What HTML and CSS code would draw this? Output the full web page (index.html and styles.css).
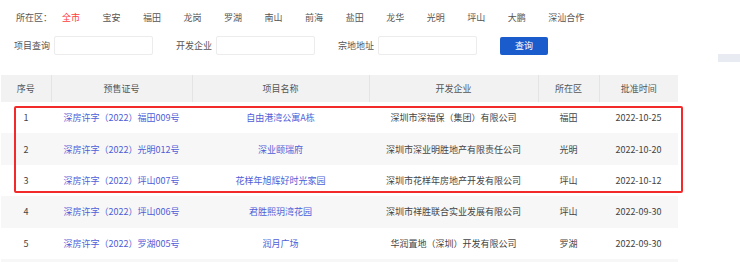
FILE: index.html
```html
<!DOCTYPE html>
<html lang="zh-CN">
<head>
<meta charset="utf-8">
<link rel="stylesheet" href="styles.css">
</head>
<body>
<div class="page">
  <div class="district-row">
    <span class="label">所在区：</span>
    <ul class="districts">
      <li class="active">全市</li>
      <li>宝安</li>
      <li>福田</li>
      <li>龙岗</li>
      <li>罗湖</li>
      <li>南山</li>
      <li>前海</li>
      <li>盐田</li>
      <li>龙华</li>
      <li>光明</li>
      <li>坪山</li>
      <li>大鹏</li>
      <li>深汕合作</li>
    </ul>
  </div>
  <div class="search-row">
    <label class="field"><span class="field-label">项目查询</span><input class="field-input" type="text"></label>
    <label class="field"><span class="field-label">开发企业</span><input class="field-input" type="text"></label>
    <label class="field"><span class="field-label">宗地地址</span><input class="field-input" type="text"></label>
    <button class="search-btn" type="button">查询</button>
  </div>
  <div class="side-tab"></div>
  <div class="table-wrap">
    <table class="list">
      <colgroup>
        <col class="c1"><col class="c2"><col class="c3"><col class="c4"><col class="c5"><col class="c6">
      </colgroup>
      <thead>
        <tr><th>序号</th><th>预售证号</th><th>项目名称</th><th>开发企业</th><th>所在区</th><th>批准时间</th></tr>
      </thead>
      <tbody>
        <tr><td>1</td><td><a class="link">深房许字（2022）福田009号</a></td><td><a class="link">自由港湾公寓A栋</a></td><td>深圳市深福保（集团）有限公司</td><td>福田</td><td>2022-10-25</td></tr>
        <tr><td>2</td><td><a class="link">深房许字（2022）光明012号</a></td><td><a class="link">深业颐瑞府</a></td><td>深圳市深业明胜地产有限责任公司</td><td>光明</td><td>2022-10-20</td></tr>
        <tr><td>3</td><td><a class="link">深房许字（2022）坪山007号</a></td><td><a class="link">花样年旭辉好时光家园</a></td><td>深圳市花样年房地产开发有限公司</td><td>坪山</td><td>2022-10-12</td></tr>
        <tr><td>4</td><td><a class="link">深房许字（2022）坪山006号</a></td><td><a class="link">君胜熙玥湾花园</a></td><td>深圳市祥胜联合实业发展有限公司</td><td>坪山</td><td>2022-09-30</td></tr>
        <tr><td>5</td><td><a class="link">深房许字（2022）罗湖005号</a></td><td><a class="link">润月广场</a></td><td>华润置地（深圳）开发有限公司</td><td>罗湖</td><td>2022-09-30</td></tr>
        <tr class="partial"><td></td><td></td><td></td><td></td><td></td><td></td></tr>
      </tbody>
    </table>
    <div class="highlight"></div>
  </div>
</div>
</body>
</html>
```

FILE: styles.css
```css
* { box-sizing: border-box; }
html, body { margin: 0; padding: 0; background: #fff; }
body {
  font-family: "Noto Sans CJK SC", "Noto Sans", sans-serif;
  font-size: 9px;
  color: #444;
  overflow: hidden;
}
.page { position: relative; width: 740px; height: 262px; overflow: hidden; }

.district-row {
  display: flex;
  align-items: center;
  height: 18px;
  margin-top: 8px;
  padding-left: 16px;
  color: #555;
}
.districts {
  display: flex;
  gap: 22.5px;
  list-style: none;
  margin: 0 0 0 10px;
  padding: 0;
}
.districts li { white-space: nowrap; }
.districts .active { color: #ff3c3c; }

.search-row {
  display: flex;
  align-items: center;
  margin-top: 10px;
  padding-left: 14px;
  height: 19px;
}
.field { display: flex; align-items: center; margin-right: 23px; color: #555; }
.field-label { margin-right: 4px; white-space: nowrap; }
.field-input {
  width: 99px;
  height: 19px;
  border: 1px solid #ececec;
  border-radius: 2px;
  background: #fff;
  padding: 0 4px;
  font: inherit;
  outline: none;
}
.search-btn {
  width: 48px;
  height: 18px;
  border: none;
  border-radius: 2px;
  background: #1a5ccc;
  color: #fff;
  font: inherit;
  padding: 0;
}

.side-tab {
  position: absolute;
  right: 0;
  top: 54px;
  width: 22px;
  height: 8px;
  background: #e9ebf3;
}

.table-wrap {
  position: relative;
  margin-top: 20px;
  margin-left: 1px;
  width: 677px;
}
.list {
  width: 677px;
  border-collapse: collapse;
  table-layout: fixed;
}
.c1 { width: 50px; }
.c2 { width: 141px; }
.c3 { width: 177px; }
.c4 { width: 169px; }
.c5 { width: 61px; }
.c6 { width: 79px; }
.list th {
  height: 27px;
  background: #f2f2f2;
  color: #555;
  font-weight: normal;
  border-left: 1px solid #e4e4e4;
  padding: 0;
  text-align: center;
}
.list th:first-child { border-left: none; }
.list td {
  height: 31.4px;
  padding: 0;
  text-align: center;
  color: #444;
  white-space: nowrap;
}
.list tbody tr.partial td { height: 3px; }
.list tbody tr:nth-child(even) td { background: #f7f7f7; }
.link { color: #4e5ed8; text-decoration: none; }

.highlight {
  position: absolute;
  left: 13px;
  top: 31px;
  width: 669px;
  height: 87px;
  border: 2px solid #f22a2a;
  border-radius: 2px;
  pointer-events: none;
}
```
